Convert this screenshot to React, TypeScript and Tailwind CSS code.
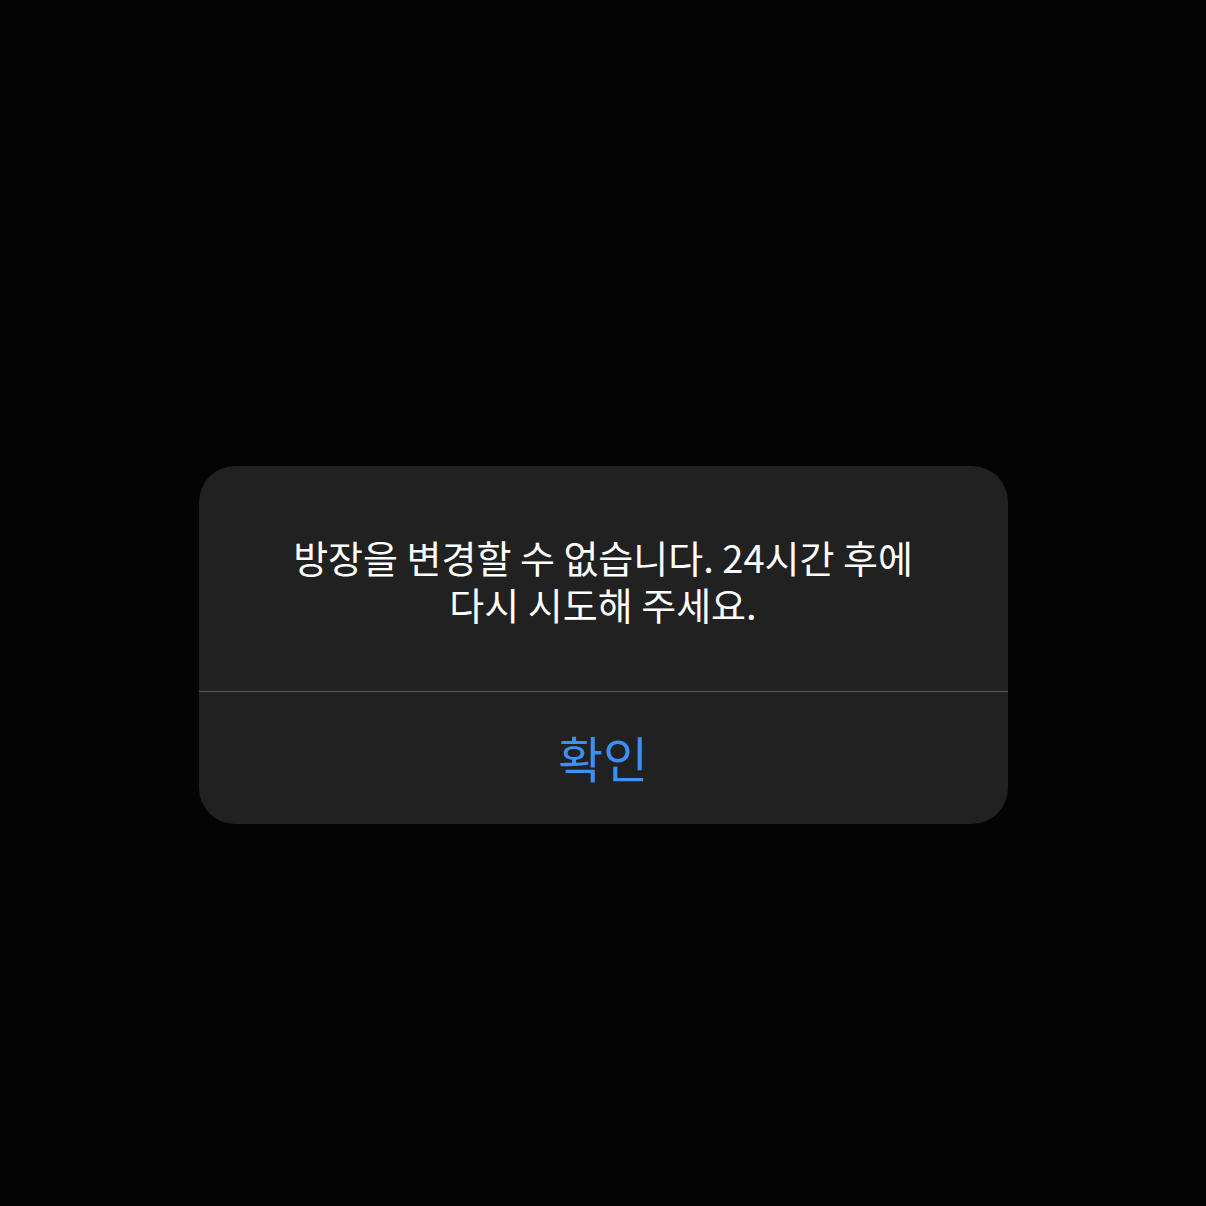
export default function App() {
  return (
    <div className="w-[1206px] h-[1206px] bg-[#040404] flex items-center justify-center pt-[84px]">
      <div className="w-[809px] rounded-[36px] bg-[#212121] flex flex-col overflow-hidden" style={{ fontFamily: '"Noto Sans CJK KR", "Noto Sans", sans-serif' }}>
        <div className="h-[225px] flex flex-col items-center justify-center px-[60px] pt-[2px] text-white text-[38px] leading-[47px] text-center">
          <span className="block">방장을 변경할 수 없습니다. 24시간 후에</span>
          <span className="block">다시 시도해 주세요.</span>
        </div>
        <div className="h-px bg-[#5a5a5a]" />
        <button type="button" className="h-[132px] flex items-center justify-center text-[#3b8ff6] text-[49px] pb-[2px]">
          확인
        </button>
      </div>
    </div>
  );
}
